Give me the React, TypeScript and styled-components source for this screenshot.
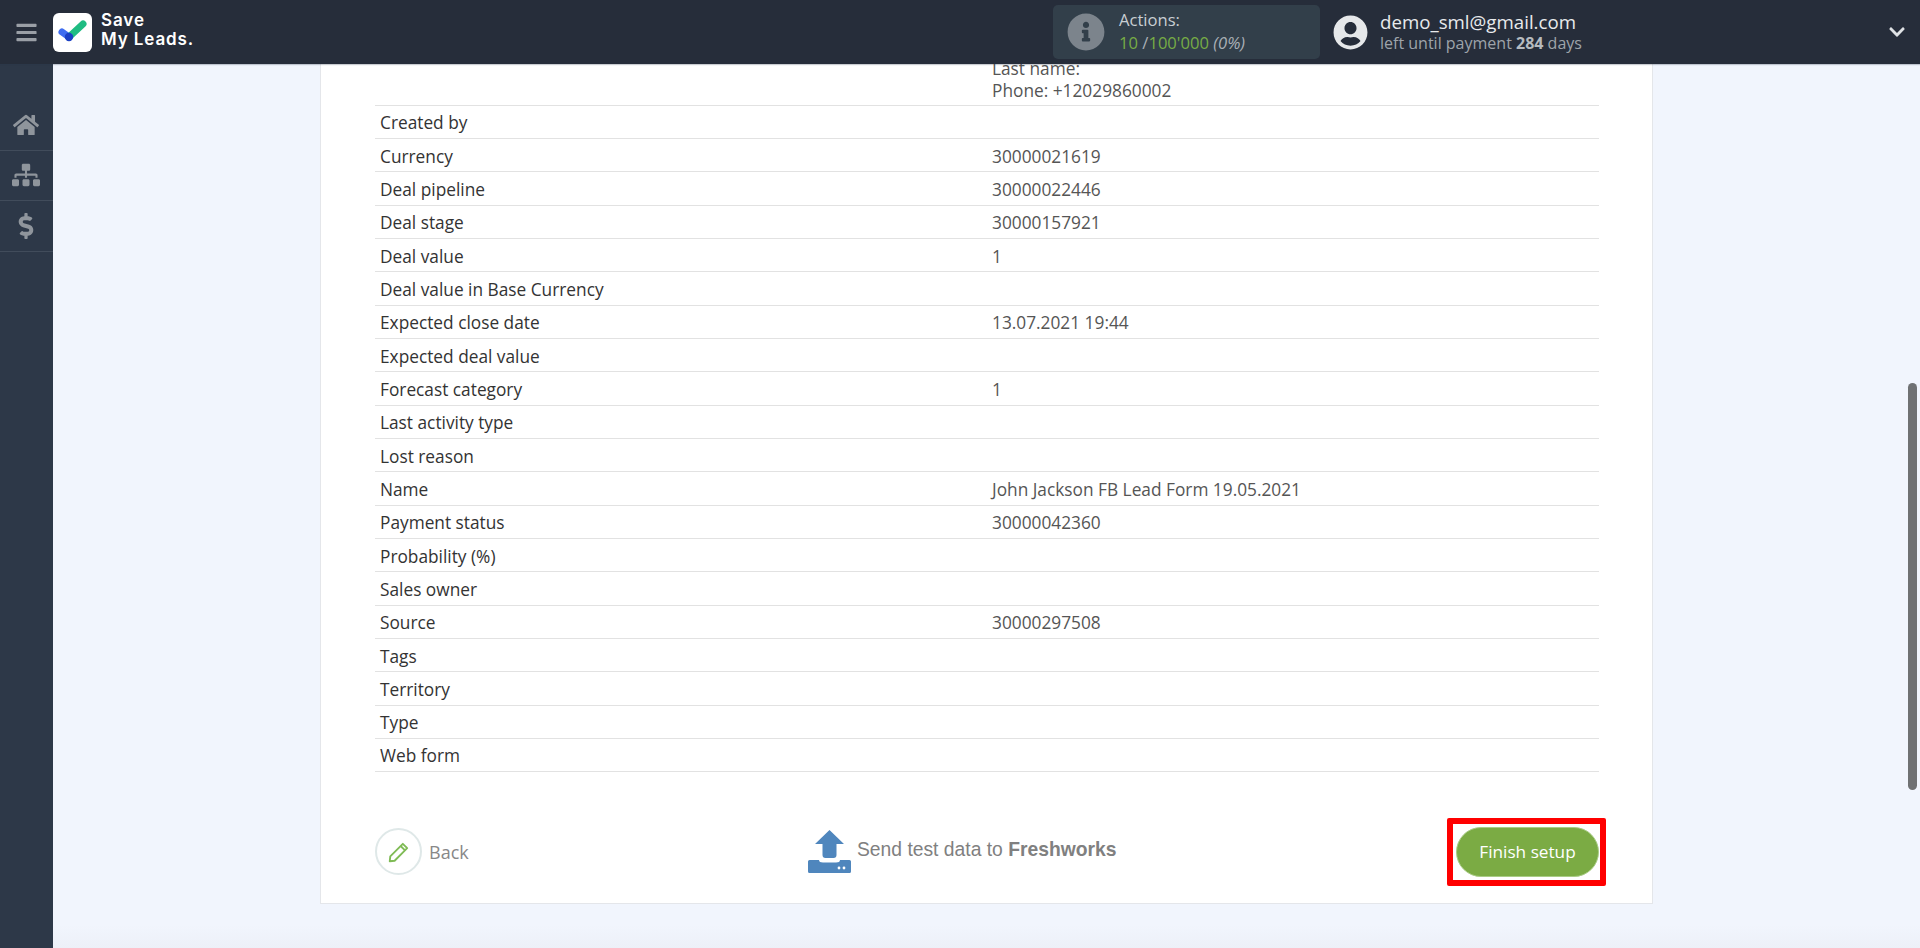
import React from 'react';
import styled, { createGlobalStyle } from 'styled-components';
import { FaHome, FaSitemap, FaDollarSign, FaInfoCircle, FaUserCircle, FaChevronDown, FaBars } from 'react-icons/fa';

const Global = createGlobalStyle`
  html, body { margin: 0; padding: 0; height: 100%; overflow: hidden; }
  body { background: #f0f4fc; font-family: "Open Sans", sans-serif; }
  #root { height: 100%; }
`;

const Page = styled.div`
  width: 1920px; height: 948px; display: flex; flex-direction: column; position: relative; overflow: hidden;
  background: linear-gradient(to bottom, #f1f5fd 0, #f1f5fd 925px, #edf0f8 948px);
`;
const Header = styled.header`
  height: 64px; flex: none; background: #262d3a; display: flex; align-items: center; position: relative; z-index: 2;
  box-shadow: 0 1px 1px rgba(40, 50, 70, .25);
`;
const Burger = styled.div`
  width: 53px; display: flex; justify-content: center; color: #9a9fa6; font-size: 23px; line-height: 0;
`;
const LogoBox = styled.div`
  width: 39px; height: 39px; background: #fff; border-radius: 6px; display: flex; align-items: center; justify-content: center;
`;
const LogoText = styled.div`
  margin: -4px 0 0 9px; color: #fff; font-family: "Inter", sans-serif; font-weight: 600; font-size: 17px; line-height: 19.5px; letter-spacing: .9px;
`;
const Spacer = styled.div`flex: 1;`;
const Actions = styled.div`
  width: 267px; height: 54px; background: #323f4a; border-radius: 5px; display: flex; align-items: center; padding-left: 14px; box-sizing: border-box; margin-right: 13px;
`;
const InfoIcon = styled.div`color: #7c848c; font-size: 38px; line-height: 0; margin-right: 14px;`;
const ActionsText = styled.div`color: #c9ced3; font-size: 16.6px; line-height: 23px; margin-top: -2px;`;
const Green = styled.span`color: #77ac45;`;
const Muted = styled.span`color: #aab0b6;`;
const UserIcon = styled.div`color: #e6e8ea; font-size: 35px; line-height: 0; margin-right: 12px;`;
const UserText = styled.div`width: 508px; display: flex; flex-direction: column;`;
const Email = styled.div`color: #e8eaec; font-size: 18.7px; line-height: 22px;`;
const Until = styled.div`color: #9ea4aa; font-size: 16px; line-height: 20px; b { font-weight: 700; color: #b5babf; }`;
const Chevron = styled.div`color: #dfe2e5; font-size: 18px; line-height: 0; width: 33px; margin-right: -1px;`;

const Body = styled.div`flex: 1; display: flex; min-height: 0;`;
const Sidebar = styled.nav`width: 53px; flex: none; background: #2d3848; padding-top: 36px; box-sizing: border-box;`;
const NavItem = styled.div<{ $size: number }>`
  height: 50.5px; display: flex; align-items: center; justify-content: center; color: #8f959c; font-size: ${p => p.$size}px;
  border-bottom: 1px solid #414c5b; box-sizing: border-box; padding-right: 1px;
`;
const Main = styled.main`flex: 1; padding-left: 267px; overflow: hidden; min-width: 0;`;
const Card = styled.section`
  width: 1333px; height: 840px; background: #fff; border: 1px solid #e4e6ea; border-top: none; box-sizing: border-box;
  padding: 0 53px 0 54px; display: flex; flex-direction: column;
`;
const Table = styled.div`display: flex; flex-direction: column;`;
const Row = styled.div`
  display: flex; height: 33.33px; align-items: center; border-bottom: 1.5px solid #e2e2e2; box-sizing: border-box; padding: 2px 0 0 5px;
  font-size: 17.3px;
`;
const FirstRow = styled(Row)`height: 41.6px; align-items: flex-end; padding-bottom: 3px; line-height: 22px;`;
const Label = styled.div`width: 612px; flex: none; color: #333;`;
const Value = styled.div`color: #555;`;
const Footer = styled.div`flex: 1; display: flex; align-items: center; padding-top: 28px;`;
const Back = styled.div`display: flex; align-items: center; width: 433px;`;
const BackCircle = styled.div`
  width: 47px; height: 47px; border-radius: 50%; border: 2px solid #dfe8e8; box-sizing: border-box; display: flex; align-items: center; justify-content: center; margin-right: 7px;
`;
const BackText = styled.span`color: #888; font-size: 18px;`;
const Send = styled.div`display: flex; align-items: center; flex: 1; color: #808080; font-family: "Liberation Sans", sans-serif; font-size: 19.3px; b { font-weight: 700; }`;
const SendText = styled.span`margin-left: 6px; position: relative; top: -2px;`;
const Finish = styled.button`
  position: relative; width: 143px; height: 50px; border: 1px solid #a9cc86; border-radius: 25px; background: #7bab44; color: #fff; font-family: "Open Sans", sans-serif; font-size: 17.2px; padding: 0;
  &::after { content: ""; position: absolute; left: -10px; right: -8px; top: -10px; bottom: -10px; border: 6px solid #ff0000; border-radius: 2px; }
`;
const Thumb = styled.div`position: absolute; right: 3px; top: 383px; width: 9px; height: 407px; background: #6f7173; border-radius: 5px; z-index: 3;`;

const rows: [string, string][] = [
  ['Created by', ''], ['Currency', '30000021619'], ['Deal pipeline', '30000022446'], ['Deal stage', '30000157921'],
  ['Deal value', '1'], ['Deal value in Base Currency', ''], ['Expected close date', '13.07.2021 19:44'], ['Expected deal value', ''],
  ['Forecast category', '1'], ['Last activity type', ''], ['Lost reason', ''], ['Name', 'John Jackson FB Lead Form 19.05.2021'],
  ['Payment status', '30000042360'], ['Probability (%)', ''], ['Sales owner', ''], ['Source', '30000297508'], ['Tags', ''],
  ['Territory', ''], ['Type', ''], ['Web form', ''],
];

export default function App() {
  return (
    <Page>
      <Global />
      <Header>
        <Burger><FaBars /></Burger>
        <LogoBox>
          <svg width="30" height="24" viewBox="0 0 30 24">
            <path d="M4 12 L11 17" stroke="#3f6df0" strokeWidth="7" strokeLinecap="round" />
            <path d="M11 17 L25 4" stroke="#1fbc82" strokeWidth="7" strokeLinecap="round" />
            <circle cx="11" cy="17" r="4.2" fill="#1b3fc4" />
          </svg>
        </LogoBox>
        <LogoText>Save<br />My Leads.</LogoText>
        <Spacer />
        <Actions>
          <InfoIcon><FaInfoCircle /></InfoIcon>
          <ActionsText>
            Actions:<br />
            <Green>10</Green> <Muted>/</Muted><Green>100'000</Green> <Muted><i>(0%)</i></Muted>
          </ActionsText>
        </Actions>
        <UserIcon><FaUserCircle /></UserIcon>
        <UserText>
          <Email>demo_sml@gmail.com</Email>
          <Until>left until payment <b>284</b> days</Until>
        </UserText>
        <Chevron><FaChevronDown /></Chevron>
      </Header>
      <Body>
        <Sidebar>
          <NavItem $size={26}><FaHome /></NavItem>
          <NavItem $size={28}><FaSitemap /></NavItem>
          <NavItem $size={26}><FaDollarSign /></NavItem>
        </Sidebar>
        <Main>
          <Card>
            <Table>
              <FirstRow>
                <Label />
                <Value>Last name:<br />Phone: +12029860002</Value>
              </FirstRow>
              {rows.map(([l, v]) => (
                <Row key={l}><Label>{l}</Label><Value>{v}</Value></Row>
              ))}
            </Table>
            <Footer>
              <Back>
                <BackCircle>
                  <svg width="24" height="24" viewBox="0 0 22 22" fill="none" stroke="#7fbb55" strokeWidth="1.7" strokeLinejoin="round">
                    <path d="M3 15 L14.5 3.5 L18.5 7.5 L7 19 L2.5 19.5 Z" />
                    <path d="M12.5 5.5 L16.5 9.5" />
                  </svg>
                </BackCircle>
                <BackText>Back</BackText>
              </Back>
              <Send>
                <svg width="43" height="43" viewBox="0 0 43 43">
                  <path d="M21.5 0 L36 14 L28.5 14 L28.5 25 Q28.5 28 25.5 28 L17.5 28 Q14.5 28 14.5 25 L14.5 14 L7 14 Z" fill="#4f86bd" />
                  <path d="M1.5 30 L11 30 Q11 32.5 15 32.5 L28 32.5 Q32 32.5 32 30 L41.5 30 Q43 30 43 31.5 L43 41.5 Q43 43 41.5 43 L1.5 43 Q0 43 0 41.5 L0 31.5 Q0 30 1.5 30 Z" fill="#4f86bd" />
                  <circle cx="31" cy="38" r="1.4" fill="#fff" />
                  <circle cx="36" cy="38" r="1.4" fill="#fff" />
                </svg>
                <SendText>Send test data to <b>Freshworks</b></SendText>
              </Send>
              <Finish>Finish setup</Finish>
            </Footer>
          </Card>
        </Main>
      </Body>
      <Thumb />
    </Page>
  );
}
